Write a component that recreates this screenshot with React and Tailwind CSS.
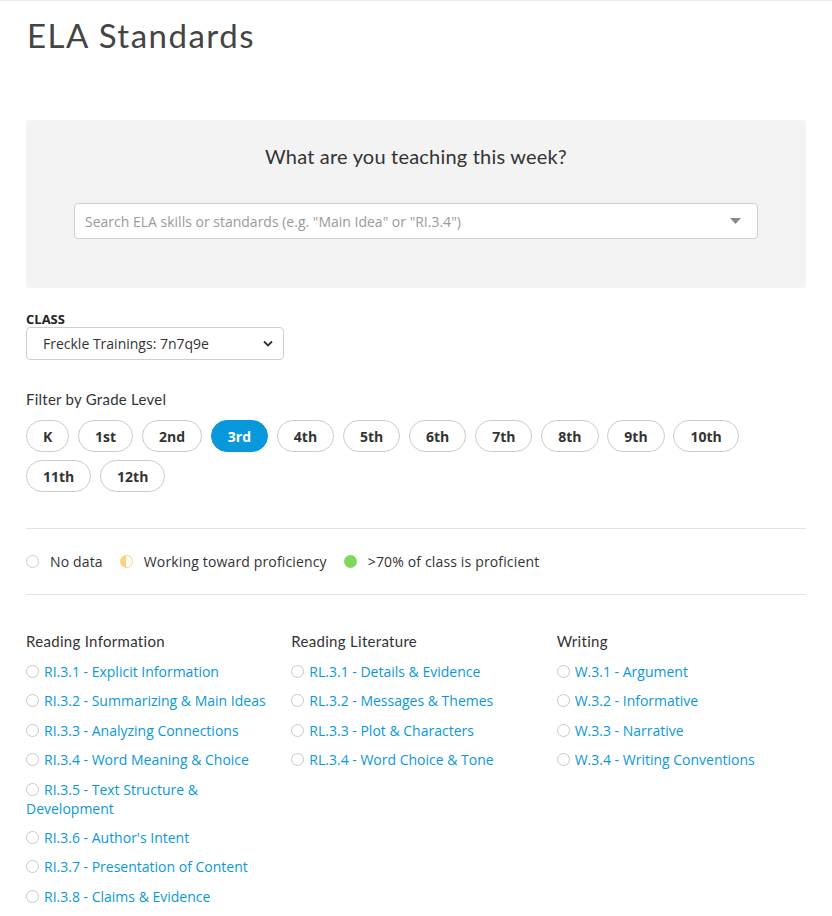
import React from "react";

const head = { fontFamily: "Lato, 'Noto Sans', sans-serif" };
const body = { fontFamily: "'Open Sans', 'Noto Sans', sans-serif" };

const grades = ["K", "1st", "2nd", "3rd", "4th", "5th", "6th", "7th", "8th", "9th", "10th", "11th", "12th"];

const columns = [
  {
    title: "Reading Information",
    items: [
      "RI.3.1 - Explicit Information",
      "RI.3.2 - Summarizing & Main Ideas",
      "RI.3.3 - Analyzing Connections",
      "RI.3.4 - Word Meaning & Choice",
      "RI.3.5 - Text Structure & Development",
      "RI.3.6 - Author's Intent",
      "RI.3.7 - Presentation of Content",
      "RI.3.8 - Claims & Evidence",
    ],
  },
  {
    title: "Reading Literature",
    items: [
      "RL.3.1 - Details & Evidence",
      "RL.3.2 - Messages & Themes",
      "RL.3.3 - Plot & Characters",
      "RL.3.4 - Word Choice & Tone",
    ],
  },
  {
    title: "Writing",
    items: [
      "W.3.1 - Argument",
      "W.3.2 - Informative",
      "W.3.3 - Narrative",
      "W.3.4 - Writing Conventions",
    ],
  },
];

function Dot() {
  return (
    <span className="inline-block w-[13px] h-[13px] rounded-full border border-[#c8c8c8] bg-white align-[-1px] mr-[5px]" />
  );
}

export default function App() {
  return (
    <div className="w-[832px] min-h-[916px] bg-white border-t border-[#ececec] text-[#333]" style={body}>
      <div className="px-[26px]">
        <h1 className="text-[33px] leading-[40px] tracking-[1.5px] text-[#444] mt-[14px] ml-[1px]" style={head}>
          ELA Standards
        </h1>

        <div className="mt-[65px] bg-[#f3f3f3] rounded-[4px] h-[168px] flex flex-col items-center">
          <div className="mt-[24px] text-[20px] leading-[24px] tracking-[0.2px] text-[#333]" style={head}>
            What are you teaching this week?
          </div>
          <div className="mt-[35px] w-[684px] h-[36px] bg-white border border-[#cfcfcf] rounded-[4px] flex items-center pl-[10px] pr-[12px]">
            <span className="flex-1 text-[14px] text-[#9a9a9a]">
              Search ELA skills or standards (e.g. "Main Idea" or "RI.3.4")
            </span>
            <svg width="11" height="6" viewBox="0 0 11 6" className="mr-[4px]">
              <path d="M0 0 L11 0 L5.5 6 Z" fill="#8a8a8a" />
            </svg>
          </div>
        </div>

        <div className="mt-[23px] text-[13px] font-bold leading-[16px] text-[#222]">CLASS</div>
        <div className="w-[258px] h-[33px] border border-[#cfcfcf] rounded-[4px] bg-white flex items-center pl-[16px] pr-[10px]">
          <span className="flex-1 text-[14px] text-[#333]">Freckle Trainings: 7n7q9e</span>
          <svg width="10" height="7" viewBox="0 0 10 7">
            <path d="M1 1.5 L5 5.5 L9 1.5" stroke="#333" strokeWidth="1.8" fill="none" />
          </svg>
        </div>

        <div className="mt-[29px] text-[15px] leading-[20px] tracking-[0.25px] text-[#333]" style={head}>
          Filter by Grade Level
        </div>
        <div className="mt-[11px] flex flex-wrap gap-x-[8.8px] gap-y-[8px] w-[740px]">
          {grades.map((g) => (
            <button
              key={g}
              className={
                "h-[32px] px-[16px] rounded-full text-[14px] font-bold border " +
                (g === "3rd"
                  ? "bg-[#0a98dc] border-[#0a98dc] text-white"
                  : "bg-white border-[#cccccc] text-[#333]")
              }
              style={body}
            >
              {g}
            </button>
          ))}
        </div>

        <div className="mt-[36px] border-t border-[#e3e3e3]" />
        <div className="h-[65px] flex items-center text-[14px] text-[#333] tracking-[0.15px]">
          <span className="w-[13px] h-[13px] rounded-full border border-[#cfcfcf] bg-white" />
          <span className="ml-[11px]">No data</span>
          <span
            className="ml-[17px] w-[13px] h-[13px] rounded-full border border-[#fdd27e]"
            style={{ background: "linear-gradient(90deg, #fdd27e 50%, #ffffff 50%)" }}
          />
          <span className="ml-[11px]">Working toward proficiency</span>
          <span className="ml-[17px] w-[13px] h-[13px] rounded-full bg-[#7fd959]" />
          <span className="ml-[11px]">&gt;70% of class is proficient</span>
        </div>
        <div className="border-t border-[#e3e3e3]" />

        <div className="mt-[36px] grid grid-cols-3 gap-x-[16px]">
          {columns.map((c) => (
            <div key={c.title}>
              <div className="text-[15px] leading-[20px] tracking-[0.3px] text-[#333]" style={head}>
                {c.title}
              </div>
              <div className="mt-[11px] flex flex-col gap-[10.4px]">
                {c.items.map((it) => (
                  <div key={it} className="text-[14px] leading-[19px] text-[#0a98dc] pr-[6px]">
                    <Dot />
                    {it}
                  </div>
                ))}
              </div>
            </div>
          ))}
        </div>
      </div>
    </div>
  );
}
